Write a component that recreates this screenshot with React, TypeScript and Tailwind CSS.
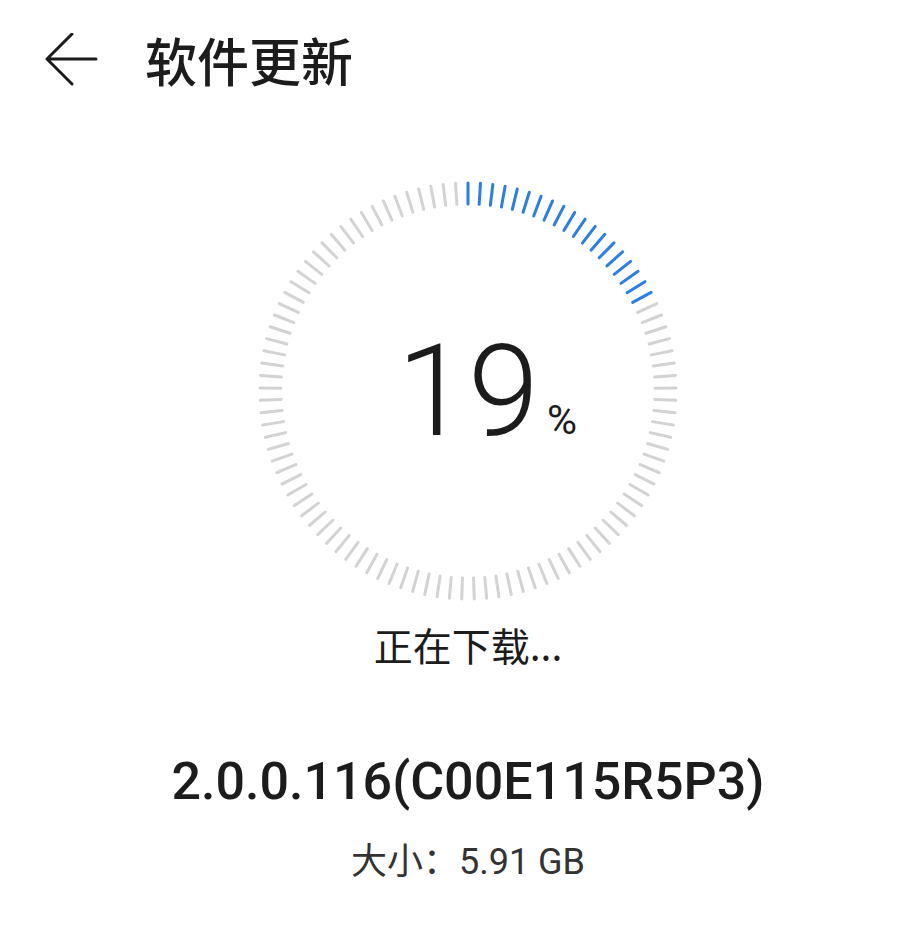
import React from "react"

const TICKS = 105
const PROGRESS = 19

function ProgressRing() {
  const c = 210
  const outer = 208
  const inner = 187
  const lines = []
  for (let i = 0; i < TICKS; i++) {
    const a = (i / TICKS) * Math.PI * 2
    const s = Math.sin(a)
    const co = Math.cos(a)
    lines.push(
      <line
        key={i}
        x1={c + s * inner}
        y1={c - co * inner}
        x2={c + s * outer}
        y2={c - co * outer}
        stroke={i < PROGRESS ? "#2b7ee3" : "#d3d3d3"}
        strokeWidth={3}
        strokeLinecap="round"
      />
    )
  }
  return (
    <svg width={420} height={420} viewBox="0 0 420 420">
      {lines}
    </svg>
  )
}

export default function App() {
  return (
    <div className="min-h-[946px] w-[922px] bg-white text-[#1c1c1c] font-['Roboto','Noto_Sans_CJK_SC',sans-serif]">
      <div className="flex h-[124px] items-center pl-[44px] pb-[4px]">
        <svg width="54" height="54" viewBox="0 0 54 54" className="shrink-0">
          <path
            d="M52 26 H3 M28 1 L3 26 L28 51"
            fill="none"
            stroke="#1c1c1c"
            strokeWidth="3"
            strokeLinecap="round"
            strokeLinejoin="round"
          />
        </svg>
        <h1 className="ml-[47px] text-[52px] font-medium leading-none font-['Noto_Sans_CJK_SC',sans-serif]">
          软件更新
        </h1>
      </div>

      <div className="flex flex-col items-center pl-[14px]">
        <div className="relative mt-[57px] h-[420px] w-[420px]">
          <ProgressRing />
          <div className="absolute inset-0 flex items-center justify-center">
            <div className="relative">
              <span className="block text-[128px] font-light leading-none font-['Roboto',sans-serif]">
                19
              </span>
              <span className="absolute left-full bottom-[14px] ml-[8px] text-[41px] leading-none font-['Roboto',sans-serif]">
                %
              </span>
            </div>
          </div>
        </div>

        <p className="mt-[24px] text-[39px] leading-none font-['Noto_Sans_CJK_SC',sans-serif]">
          正在下载...
        </p>

        <p className="mt-[92px] text-[52px] font-medium leading-none font-['Roboto',sans-serif]">
          2.0.0.116(C00E115R5P3)
        </p>

        <p className="mt-[36px] text-[36px] leading-none text-[#333] font-['Roboto','Noto_Sans_CJK_SC',sans-serif]">
          大小：5.91 GB
        </p>
      </div>
    </div>
  )
}
